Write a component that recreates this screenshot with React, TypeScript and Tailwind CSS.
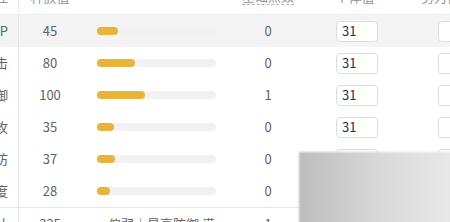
import type { ReactNode } from "react";

type StatRow = { name: string; base: number; point: number };

const rows: StatRow[] = [
  { name: "HP", base: 45, point: 0 },
  { name: "攻击", base: 80, point: 0 },
  { name: "防御", base: 100, point: 1 },
  { name: "特攻", base: 35, point: 0 },
  { name: "特防", base: 37, point: 0 },
  { name: "速度", base: 28, point: 0 },
];

function Cells({ name, children }: { name: ReactNode; children: ReactNode }) {
  return (
    <>
      <div className="flex w-[19px] shrink-0 items-center justify-end overflow-hidden whitespace-nowrap border-r border-[#e4e6eb] pr-[10px]">
        {name}
      </div>
      {children}
    </>
  );
}

function Input({ value }: { value?: number }) {
  return (
    <div className="flex h-[21px] w-[42px] shrink-0 items-center rounded-[4px] border border-[#d9dce2] bg-white pl-[5px] text-[13px] text-[#303133]">
      {value ?? ""}
    </div>
  );
}

export default function App() {
  return (
    <div
      className="relative h-[222px] w-[450px] overflow-hidden bg-white text-[13px] text-[#606266]"
      style={{ fontFamily: '"Noto Sans CJK SC", "Noto Sans", sans-serif' }}
    >
      <div className="-mt-[18px]">
        <div className="flex h-[33px] whitespace-nowrap border-b border-[#ebeef5] pb-[3px] text-[#909399]">
          <Cells name="属性">
            <div className="flex w-[62px] shrink-0 items-center justify-center">种族值</div>
            <div className="w-[151px] shrink-0" />
            <div className="flex w-[72px] shrink-0 items-center justify-center">
              <span className="border-b border-dashed border-[#b0b3b8] leading-[16px]">基础点数</span>
            </div>
            <div className="flex w-[102px] shrink-0 items-center justify-center">个体值</div>
            <div className="flex shrink-0 items-center pl-[15px]">努力值</div>
          </Cells>
        </div>

        {rows.map((row, i) => (
          <div key={row.name} className={`flex h-[32px] ${i === 0 ? "bg-[#f4f4f5]" : ""}`}>
            <Cells name={row.name}>
              <div className="flex w-[62px] shrink-0 items-center justify-center">{row.base}</div>
              <div className="flex w-[151px] shrink-0 items-center pl-[16px]">
                <div className="h-[8px] w-[119px] rounded-full bg-[#f2f2f3]">
                  <div
                    className="h-full rounded-full bg-[#e8b43a]"
                    style={{ width: `${Math.max(12, (row.base / 250) * 119)}px` }}
                  />
                </div>
              </div>
              <div className="flex w-[72px] shrink-0 items-center justify-center">{row.point}</div>
              <div className="flex w-[102px] shrink-0 items-center pl-[32px]">
                <Input value={31} />
              </div>
              <div className="flex shrink-0 items-center pl-[32px]">
                <Input />
              </div>
            </Cells>
          </div>
        ))}

        <div className="flex h-[32px] whitespace-nowrap border-t border-[#e4e6eb]">
          <Cells name="总计">
            <div className="flex w-[62px] shrink-0 items-center justify-center">325</div>
            <div className="flex w-[151px] shrink-0 items-center pl-[27px]">偏弱｜最高防御 满</div>
            <div className="flex w-[72px] shrink-0 items-center justify-center">1</div>
          </Cells>
        </div>
      </div>

      <div className="pointer-events-none absolute left-[299px] top-[152px] h-[72px] w-[160px] bg-gradient-to-r from-[#bdbdbd] via-[#d8d8d8] to-[#eaeaea] blur-[1px]" />
    </div>
  );
}
